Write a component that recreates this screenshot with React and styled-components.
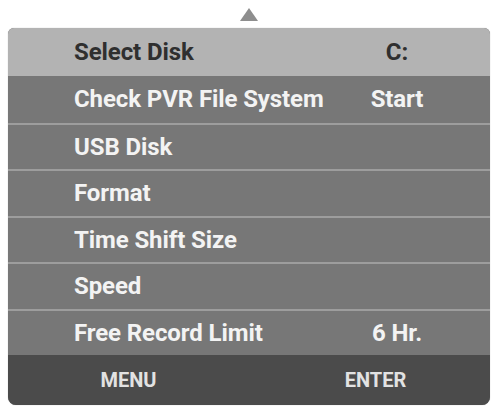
import React from 'react'
import styled, { createGlobalStyle } from 'styled-components'

const rows = [
  { label: 'Select Disk', value: 'C:', active: true },
  { label: 'Check PVR File System', value: 'Start' },
  { label: 'USB Disk' },
  { label: 'Format' },
  { label: 'Time Shift Size' },
  { label: 'Speed' },
  { label: 'Free Record Limit', value: '6 Hr.' },
]

const App = () => {
  return (
    <>
      <GlobalStyle />
      <Screen>
        <UpArrow />
        <Panel>
          {rows.map((row) => (
            <Row key={row.label} $active={row.active}>
              <Label>{row.label}</Label>
              <Value>{row.value}</Value>
            </Row>
          ))}
          <Footer>
            <FooterKey>MENU</FooterKey>
            <FooterKey $shift={12}>ENTER</FooterKey>
          </Footer>
        </Panel>
      </Screen>
    </>
  )
}

export default App

const GlobalStyle = createGlobalStyle`
  html, body {
    margin: 0;
    padding: 0;
    background: #ffffff;
  }
  body {
    font-family: Roboto, "Liberation Sans", Arial, sans-serif;
  }
`

const Screen = styled.div`
  width: 493px;
  height: 406px;
  display: flex;
  flex-direction: column;
  align-items: center;
  padding-top: 8px;
  box-sizing: border-box;
`

const UpArrow = styled.div`
  width: 0;
  height: 0;
  margin-left: 4px;
  border-left: 9px solid transparent;
  border-right: 9px solid transparent;
  border-bottom: 13px solid #8e8e8e;
`

const Panel = styled.div`
  margin-top: 7px;
  width: 482px;
  margin-left: 5px;
  display: flex;
  flex-direction: column;
  border-radius: 6px 6px 8px 8px;
  overflow: hidden;
  background: #787878;
  box-shadow: 0 0 1px rgba(0, 0, 0, 0.35);
`

const Row = styled.div`
  display: grid;
  grid-template-columns: 1fr 80px;
  align-items: center;
  height: ${(p) => (p.$active ? '48px' : '46.5px')};
  box-sizing: border-box;
  padding: 0 53px 0 66px;
  background: ${(p) => (p.$active ? '#b3b3b3' : '#777777')};
  color: ${(p) => (p.$active ? '#2f2f2f' : '#f3f3f3')};
  border-top: ${(p) => (p.$active ? 'none' : '2px solid #9d9d9d')};
  &:nth-child(2) {
    border-top: none;
  }
  font-size: 24px;
  font-weight: 700;
  letter-spacing: -0.1px;
`

const Label = styled.span`
  white-space: nowrap;
`

const Value = styled.span`
  text-align: center;
  white-space: nowrap;
`

const Footer = styled.div`
  display: grid;
  grid-template-columns: 1fr 1fr;
  align-items: center;
  height: 50px;
  background: #4b4b4b;
  color: #e2e2e2;
  font-size: 20px;
  font-weight: 700;
`

const FooterKey = styled.span`
  text-align: center;
  padding-left: ${(p) => (p.$shift ? `${p.$shift}px` : '0')};
`
